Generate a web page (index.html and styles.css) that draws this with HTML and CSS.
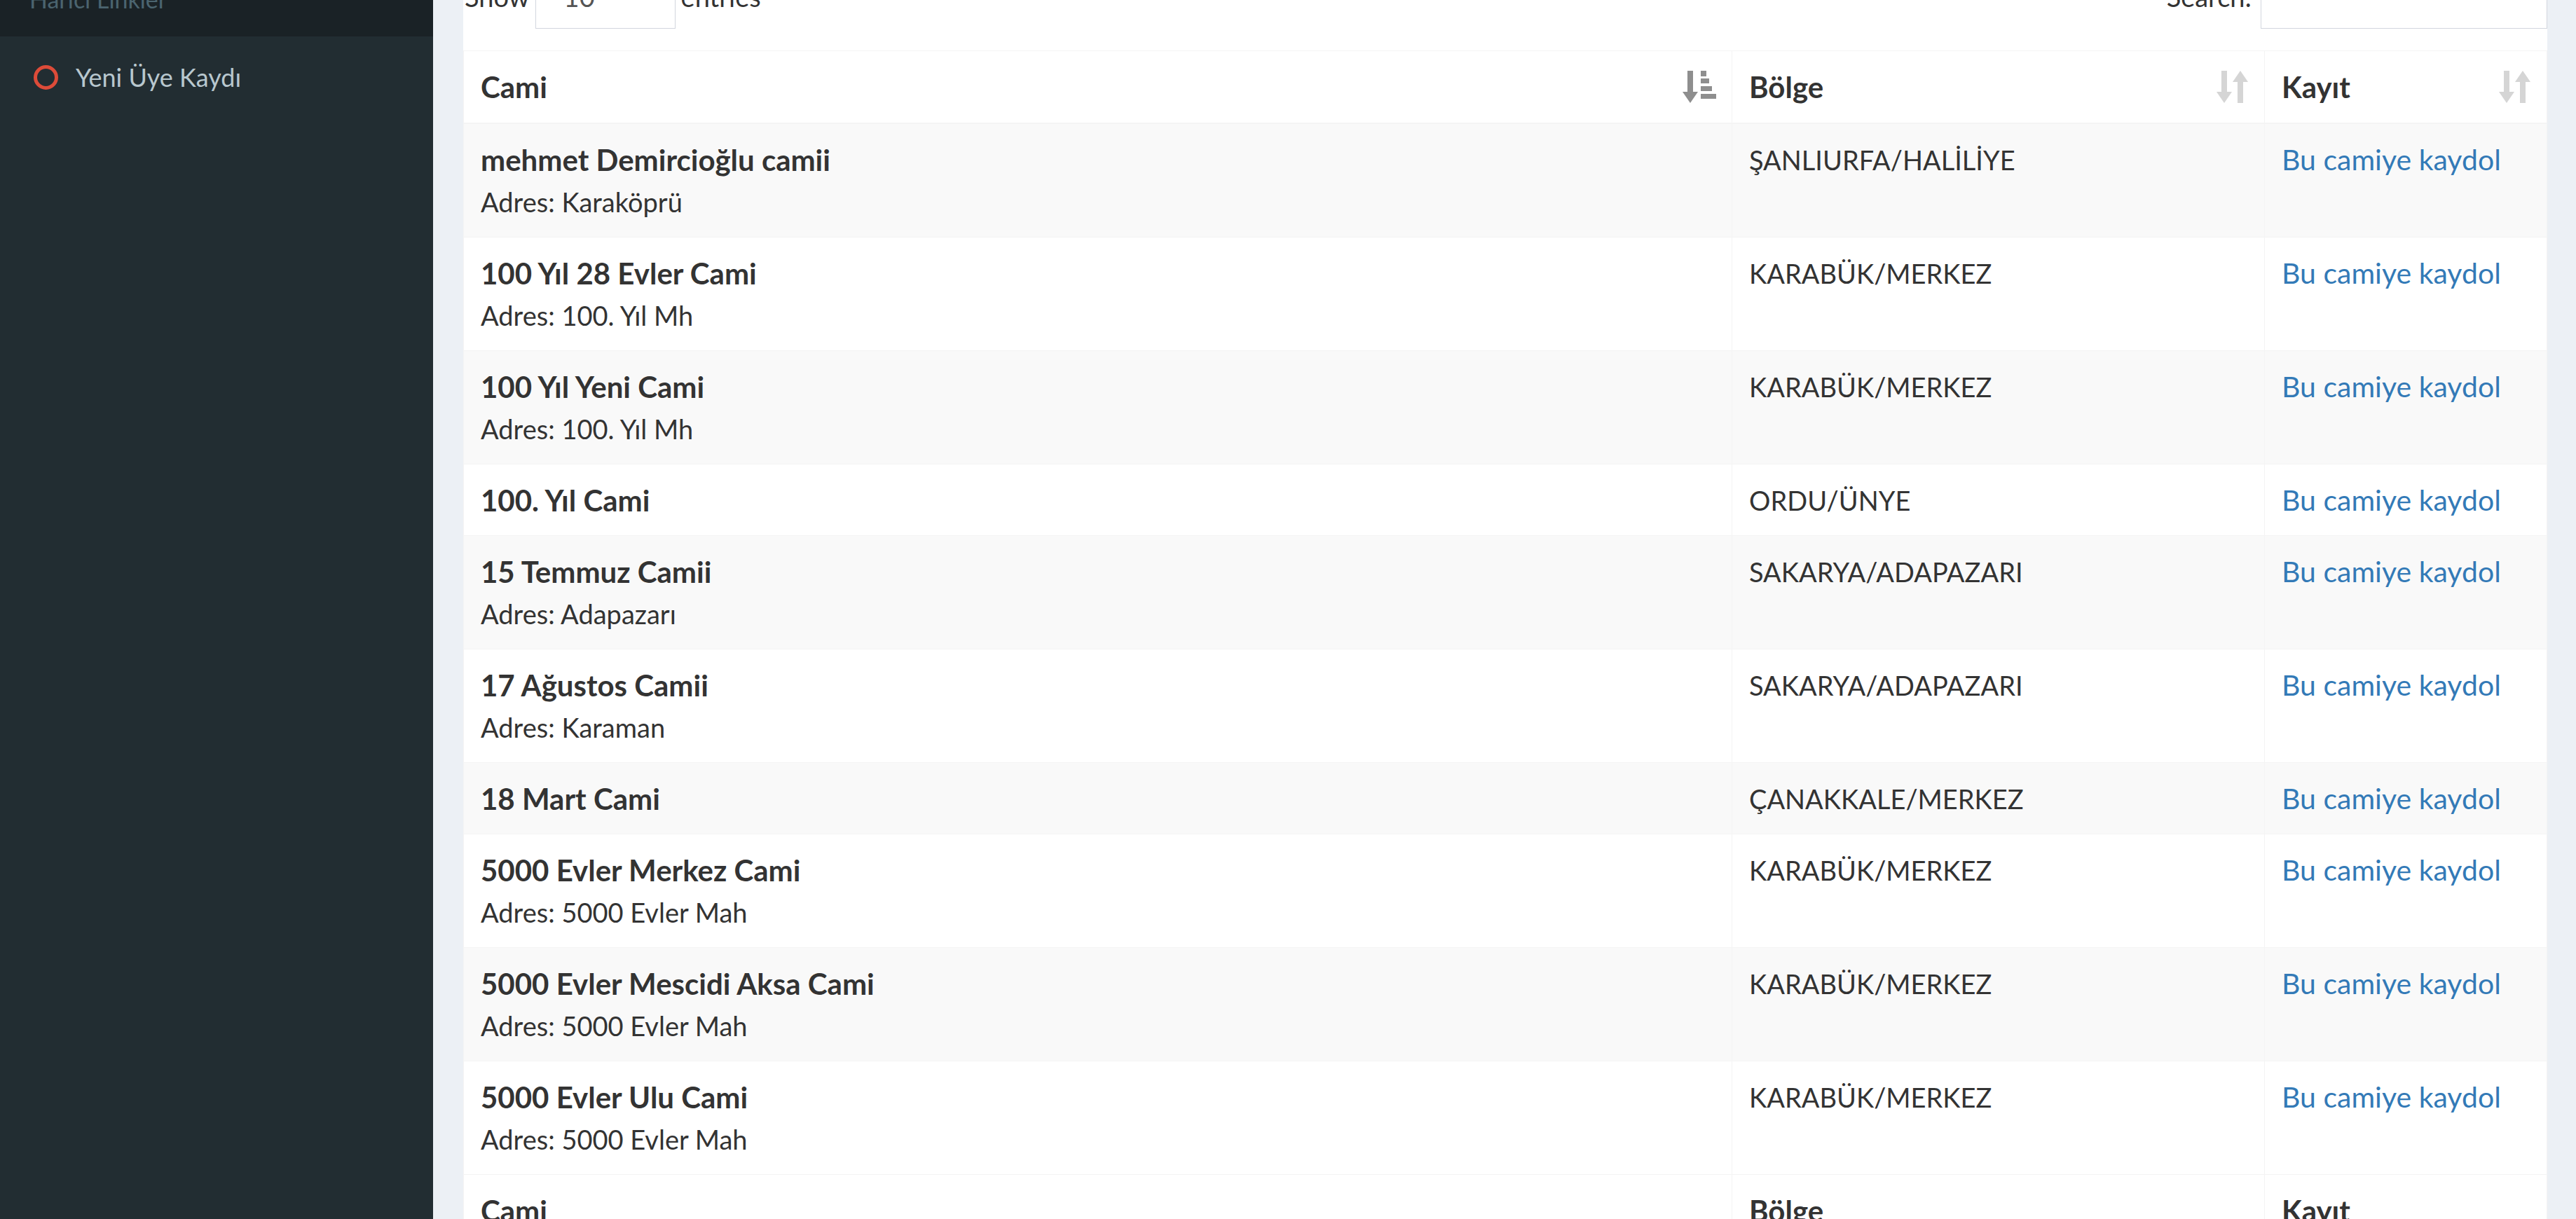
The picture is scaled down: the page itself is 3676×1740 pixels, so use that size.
FILE: index.html
```html
<!DOCTYPE html>
<html lang="tr">
<head>
    <meta charset="UTF-8">
    <title>Cami Listesi</title>
    <link rel="stylesheet" href="styles.css">
</head>
<body>
    <div class="wrapper">
        <aside class="sidebar">
            <div class="sidebar-header">Harici Linkler</div>
            <a class="sidebar-link" href="#">
                <span class="circle-icon"></span>
                <span>Yeni Üye Kaydı</span>
            </a>
        </aside>

        <main class="content">
            <div class="box">
                <div class="dt-top">
                    <label class="dt-length">
                        Show
                        <span class="select-box"><span>10</span><span class="chevron">⌄</span></span>
                        entries
                    </label>
                    <label class="dt-search">
                        Search:
                        <span class="search-input"></span>
                    </label>
                </div>

                <table class="data-table">
                    <colgroup>
                        <col class="col-name">
                        <col class="col-region">
                        <col>
                    </colgroup>
                    <thead>
                        <tr>
                            <th>
                                <div class="th-inner">
                                    <span>Cami</span>
                                    <svg class="sort-icon active" viewBox="0 0 48 46">
                                        <rect x="7" y="0" width="8" height="34"/>
                                        <polygon points="0,30 22,30 11,46"/>
                                        <rect x="26" y="0" width="8" height="8"/>
                                        <rect x="26" y="11" width="12" height="7"/>
                                        <rect x="26" y="22" width="16" height="7"/>
                                        <rect x="26" y="33" width="22" height="7"/>
                                    </svg>
                                </div>
                            </th>
                            <th>
                                <div class="th-inner">
                                    <span>Bölge</span>
                                    <svg class="sort-icon" viewBox="0 0 46 46">
                                        <rect x="7" y="0" width="8" height="34"/>
                                        <polygon points="0,30 22,30 11,46"/>
                                        <polygon points="23,16 45,16 34,0"/>
                                        <rect x="30" y="12" width="8" height="34"/>
                                    </svg>
                                </div>
                            </th>
                            <th>
                                <div class="th-inner">
                                    <span>Kayıt</span>
                                    <svg class="sort-icon" viewBox="0 0 46 46">
                                        <rect x="7" y="0" width="8" height="34"/>
                                        <polygon points="0,30 22,30 11,46"/>
                                        <polygon points="23,16 45,16 34,0"/>
                                        <rect x="30" y="12" width="8" height="34"/>
                                    </svg>
                                </div>
                            </th>
                        </tr>
                    </thead>
                    <tbody>
                        <tr>
                            <td><b>mehmet Demircioğlu camii</b><br>Adres: Karaköprü</td>
                            <td>ŞANLIURFA/HALİLİYE</td>
                            <td><a href="#">Bu camiye kaydol</a></td>
                        </tr>
                        <tr>
                            <td><b>100 Yıl 28 Evler Cami</b><br>Adres: 100. Yıl Mh</td>
                            <td>KARABÜK/MERKEZ</td>
                            <td><a href="#">Bu camiye kaydol</a></td>
                        </tr>
                        <tr>
                            <td><b>100 Yıl Yeni Cami</b><br>Adres: 100. Yıl Mh</td>
                            <td>KARABÜK/MERKEZ</td>
                            <td><a href="#">Bu camiye kaydol</a></td>
                        </tr>
                        <tr>
                            <td><b>100. Yıl Cami</b></td>
                            <td>ORDU/ÜNYE</td>
                            <td><a href="#">Bu camiye kaydol</a></td>
                        </tr>
                        <tr>
                            <td><b>15 Temmuz Camii</b><br>Adres: Adapazarı</td>
                            <td>SAKARYA/ADAPAZARI</td>
                            <td><a href="#">Bu camiye kaydol</a></td>
                        </tr>
                        <tr>
                            <td><b>17 Ağustos Camii</b><br>Adres: Karaman</td>
                            <td>SAKARYA/ADAPAZARI</td>
                            <td><a href="#">Bu camiye kaydol</a></td>
                        </tr>
                        <tr>
                            <td><b>18 Mart Cami</b></td>
                            <td>ÇANAKKALE/MERKEZ</td>
                            <td><a href="#">Bu camiye kaydol</a></td>
                        </tr>
                        <tr>
                            <td><b>5000 Evler Merkez Cami</b><br>Adres: 5000 Evler Mah</td>
                            <td>KARABÜK/MERKEZ</td>
                            <td><a href="#">Bu camiye kaydol</a></td>
                        </tr>
                        <tr>
                            <td><b>5000 Evler Mescidi Aksa Cami</b><br>Adres: 5000 Evler Mah</td>
                            <td>KARABÜK/MERKEZ</td>
                            <td><a href="#">Bu camiye kaydol</a></td>
                        </tr>
                        <tr>
                            <td><b>5000 Evler Ulu Cami</b><br>Adres: 5000 Evler Mah</td>
                            <td>KARABÜK/MERKEZ</td>
                            <td><a href="#">Bu camiye kaydol</a></td>
                        </tr>
                    </tbody>
                    <tfoot>
                        <tr>
                            <th>Cami</th>
                            <th>Bölge</th>
                            <th>Kayıt</th>
                        </tr>
                    </tfoot>
                </table>
            </div>
        </main>
    </div>
</body>
</html>
```

FILE: styles.css
```css
body {
    margin: 0;
    height: 1740px;
    overflow: hidden;
    font-family: Lato, 'Noto Sans', sans-serif;
    font-size: 38px;
    line-height: 60px;
    color: #333;
    background: #ecf0f5;
}

.wrapper {
    display: flex;
    min-height: 1740px;
}

/* sidebar */
.sidebar {
    width: 618px;
    flex-shrink: 0;
    background: #222d32;
}

.sidebar-header {
    height: 52px;
    background: #1a2226;
    color: #4b646f;
    font-size: 34px;
    line-height: 36px;
    padding-left: 42px;
    overflow: hidden;
}

.sidebar-header::before {
    content: "";
    display: block;
    margin-top: -19px;
}

.sidebar-link {
    display: flex;
    align-items: center;
    gap: 25px;
    margin-top: 28px;
    padding-left: 48px;
    font-size: 36px;
    color: #b8c7ce;
    text-decoration: none;
}

.circle-icon {
    width: 25px;
    height: 25px;
    border: 5px solid #dd4b39;
    border-radius: 50%;
}

/* content */
.content {
    flex: 1;
    padding: 0 41px 0 43px;
}

.box {
    background: white;
    min-height: 1740px;
}

.dt-top {
    display: flex;
    justify-content: space-between;
    align-items: center;
    height: 92px;
    margin-top: -51px;
    padding-left: 2px;
}

.dt-length,
.dt-search {
    display: flex;
    align-items: center;
    gap: 8px;
}

.select-box {
    display: flex;
    justify-content: space-between;
    box-sizing: border-box;
    width: 200px;
    height: 92px;
    padding: 0 10px 0 40px;
    align-items: center;
    border: 1px solid #d2d6de;
    color: #555;
}

.chevron {
    font-size: 30px;
    color: #777;
    align-self: center;
    margin-top: -40px;
}

.search-input {
    display: block;
    width: 409px;
    height: 92px;
    box-sizing: border-box;
    border: 1px solid #d2d6de;
    margin-left: 5px;
}

/* table */
.data-table {
    width: 100%;
    margin-top: 31px;
    border-collapse: collapse;
    table-layout: fixed;
}

.col-name {
    width: 1810px;
}

.col-region {
    width: 760px;
}

.data-table th,
.data-table td {
    border: 1px solid #f4f4f4;
    padding: 21px 24px 20px;
    text-align: left;
    vertical-align: top;
}

.data-table th,
.data-table td b {
    font-size: 42px;
}

.data-table td b {
    vertical-align: top;
}

.data-table thead th {
    padding-bottom: 21px;
    border-bottom-width: 2px;
}

.th-inner {
    display: flex;
    justify-content: space-between;
    align-items: center;
}

.sort-icon {
    width: 46px;
    height: 46px;
    fill: #333;
    opacity: 0.2;
    margin-right: -2px;
}

.sort-icon.active {
    width: 48px;
    opacity: 0.55;
}

.data-table tbody tr:nth-child(odd) {
    background: #f9f9f9;
}

.data-table a {
    font-size: 41px;
    color: #337ab7;
    text-decoration: none;
    vertical-align: top;
}
```
